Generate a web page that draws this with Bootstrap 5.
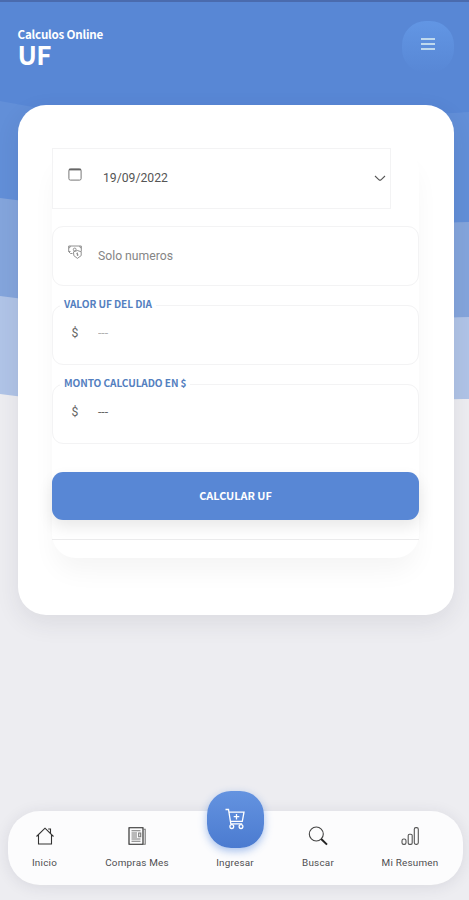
<!DOCTYPE html>
<html lang="es">
<head>
<meta charset="utf-8">
<meta name="viewport" content="width=device-width, initial-scale=1">
<title>Calculos Online - UF</title>
<link href="https://cdn.jsdelivr.net/npm/bootstrap@5.3.0/dist/css/bootstrap.min.css" rel="stylesheet">
<style>
body{background:#ededf1;font-family:Roboto,sans-serif;color:#555;height:900px;overflow:hidden}
.head-font{font-family:"Noto Sans CJK SC","Noto Sans",sans-serif;font-weight:700}
.waves{z-index:-1;width:469px;height:402px}
.status-strip{height:2px;background:#4a6bae}
.page-head{height:103px;padding:19px 15px 0 17.5px}
.page-sub{font-size:11.6px;line-height:16px;margin-top:5px;letter-spacing:-.2px}
.page-title{font-size:26px;line-height:23px;letter-spacing:-.8px}
.menu-btn{width:52px;height:52px;border-radius:24px;background:linear-gradient(#6296e4,#5887d5);padding:0 0 6px}
.menu-btn i{display:block;width:14px;height:2px;background:#bfd9ee;margin:1.5px 0}
.main-card{margin:0 15px 0 18px;height:510px;border-radius:28px;border:0;padding:43px 35px 0 34px;box-shadow:0 8px 24px rgba(40,40,70,.09)}
.form-sheet{height:410px;border-radius:24px;box-shadow:0 16px 26px -3px rgba(0,0,0,.045)}
.field{height:60px;border:1px solid #f3f3f4;border-radius:11px;margin-bottom:19px;color:#666}
.field-date{width:339px;border-radius:0;height:61px;margin-bottom:17px}
.field-icon{width:14px;margin-left:15px;flex:none;text-align:center}
.field-text{font-size:12.2px}
.field-value{margin-left:16px}
.field-date .field-value{margin-left:21px;color:#555;font-size:12.2px}
.field-hint{color:#858585}
.field-tag{left:7px;top:-10.5px;padding:0 4px;background:#fff;color:#5480c0;font-size:10.1px;line-height:16px;letter-spacing:-.08px;white-space:nowrap}
.btn-calc{height:48px;border-radius:11px;background:#5887d5;color:#fff;font-size:10.9px;margin-top:9px;padding:0 0 2px;box-shadow:0 7px 15px rgba(0,0,0,.09);border:0}
.rule{height:1px;background:#ebebec;margin-top:19px}
.tabbar{left:8px;right:6px;bottom:15px;height:74px;border-radius:32px;background:#fcfcfd;box-shadow:0 2px 15px rgba(40,40,70,.1)}
.tab-item{height:74px;padding-top:15px;font-size:9.9px;letter-spacing:.22px;line-height:13px;color:#4e4e50;text-decoration:none;white-space:nowrap}
.tab-item svg{margin-bottom:10px}
.w-home{width:73px}.w-shop{width:112px}.w-in{width:84px}.w-find{width:82px}.w-sum{width:102px}
.tab-main{width:57px;height:57px;border-radius:24px;margin-top:-35px;margin-bottom:8px;background:linear-gradient(#6493e0,#4b7bd0);box-shadow:0 3px 8px rgba(70,125,220,.48)}
.tab-main svg{margin:0 0 2px}
</style>
<script src="https://cdn.jsdelivr.net/npm/bootstrap@5.3.0/dist/js/bootstrap.bundle.min.js"></script>
</head>
<body class="position-relative">
<svg class="waves position-absolute top-0 start-0" viewBox="0 0 469 402" preserveAspectRatio="none">
  <path fill="#b0c4e7" d="M0 0H469V399Q440 398 330 408Q160 416 0 394Z"/>
  <path fill="#84a5dc" d="M0 0H469V317Q430 318 330 324Q160 318 0 296Z"/>
  <path fill="#628fd8" d="M0 0H469V222Q430 223 330 226Q160 220 0 198Z"/>
  <path fill="#5887d5" d="M0 0H469V112Q430 114 330 124Q160 132 0 101Z"/>
</svg>
<div class="status-strip"></div>
<header class="page-head d-flex justify-content-between text-white">
  <div class="head-font">
    <div class="page-sub">Calculos Online</div>
    <h1 class="page-title head-font m-0">UF</h1>
  </div>
  <button class="menu-btn btn border-0 d-flex flex-column align-items-center justify-content-center" aria-label="Menu"><i></i><i></i><i></i></button>
</header>
<main class="main-card card">
  <form class="form-sheet">
    <div class="field field-date d-flex align-items-center">
      <svg class="field-icon mb-2" width="14" height="13" viewBox="0 0 14 13" fill="none" stroke="#777"><rect x=".9" y=".9" width="12.2" height="11.2" rx="1.5"/><path d="M1 1.6H13" stroke-width="1.6" stroke="#666"/></svg>
      <span class="field-text field-value flex-grow-1">19/09/2022</span>
      <svg class="me-1" width="12" height="7" viewBox="0 0 12 7" fill="none" stroke="#555" stroke-width="1.1"><path d="M1 1L5 4.8Q6 5.6 7 4.8L11 1"/></svg>
    </div>
    <div class="field d-flex align-items-center">
      <svg class="field-icon mb-2" width="14" height="14" viewBox="0 0 14 14" fill="none" stroke="#858585" stroke-width=".9"><path d="M4.5 8.5H2.5L.7 6.7V1H13.3V6.5M.7 3Q2.3 3 2.3 1M11.7 1Q11.7 3 13.3 3M.7 6.5H2.5"/><circle cx="6.7" cy="4.5" r="1.4"/><path d="M5.5 6.8Q9.5 4.2 13.2 6.8V10.6L9.4 13.4L5.8 10.6ZM9.4 7.5V11M8.3 8.5L10.5 10"/></svg>
      <span class="field-text field-value field-hint">Solo numeros</span>
    </div>
    <div class="field position-relative d-flex align-items-center">
      <label class="field-tag head-font position-absolute">VALOR UF DEL DIA</label>
      <span class="field-icon field-text mb-1">$</span>
      <span class="field-text field-value mb-1 opacity-50">---</span>
    </div>
    <div class="field position-relative d-flex align-items-center">
      <label class="field-tag head-font position-absolute">MONTO CALCULADO EN $</label>
      <span class="field-icon field-text mb-1">$</span>
      <span class="field-text field-value mb-1">---</span>
    </div>
    <button type="button" class="btn btn-calc head-font w-100">CALCULAR UF</button>
    <div class="rule"></div>
  </form>
</main>
<nav class="tabbar position-absolute d-flex">
  <a class="tab-item w-home d-flex flex-column align-items-center"><svg width="20" height="20" viewBox="0 0 20 20" fill="none" stroke="#333" stroke-width="1.1"><path d="M1.5 10.5L10 2.2L18.5 10.5M3.5 9V18H16.5V9M13.2 3H15.5V7.2"/></svg>Inicio</a>
  <a class="tab-item w-shop d-flex flex-column align-items-center"><svg width="20" height="20" viewBox="0 0 20 20" fill="none" stroke="#444" stroke-width="1.1"><path d="M2 1.8H16V18.2H2Z" stroke="#222"/><path d="M16 3.2H18.2V18.2H16M4.5 4.8H13.5M4.5 7H10M4.5 9H10M4.5 11H10M4.5 13H13.5M4.5 15.3H13.5M11.7 7H13.7V10.8H11.7Z" stroke="#777"/></svg>Compras Mes</a>
  <a class="tab-item w-in d-flex flex-column align-items-center"><span class="tab-main d-flex align-items-center justify-content-center flex-shrink-0"><svg width="22" height="22" viewBox="0 0 22 22" fill="none" stroke="#fff" stroke-width="1.3"><path d="M1.5 1.5H4.5L6.8 15.8H18.2M5 4.2H20L18.3 13.3H6.4M12.5 6V11.5M9.7 8.7H15.3"/><circle cx="7.8" cy="18.6" r="1.9"/><circle cx="17" cy="18.6" r="1.9"/></svg></span>Ingresar</a>
  <a class="tab-item w-find d-flex flex-column align-items-center"><svg width="20" height="20" viewBox="0 0 20 20" fill="none" stroke="#444"><circle cx="8.3" cy="8" r="7" stroke-width="1.1"/><path d="M13.2 13L19 18.6" stroke="#222" stroke-width="2"/></svg>Buscar</a>
  <a class="tab-item w-sum d-flex flex-column align-items-center"><svg width="20" height="20" viewBox="0 0 20 20" fill="none" stroke="#555" stroke-width="1.1"><rect x="2" y="13" width="4" height="5.4" rx="1.7"/><rect x="8.2" y="8.3" width="4" height="10.1" rx="1.3"/><rect x="14.3" y="1.6" width="4" height="16.8" rx="1.6"/></svg>Mi Resumen</a>
</nav>
</body>
</html>
